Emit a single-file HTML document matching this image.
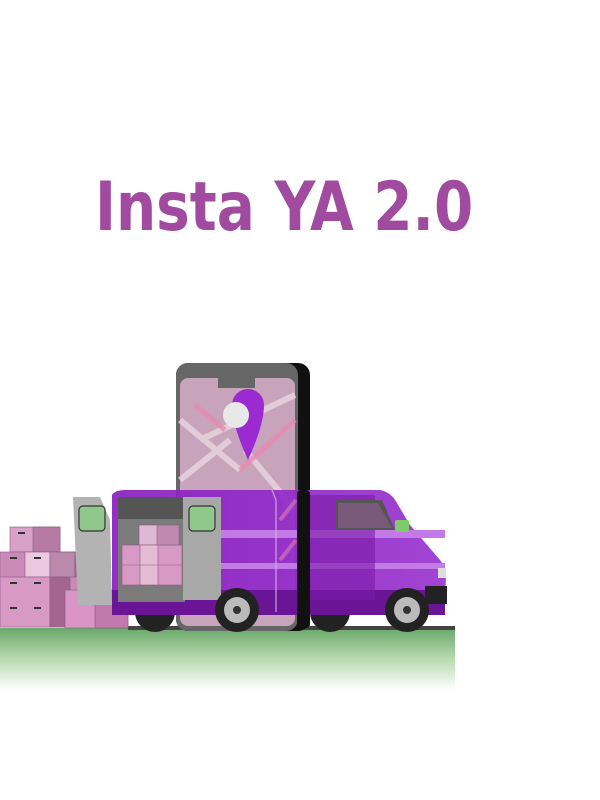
<!DOCTYPE html>
<html><head><meta charset="utf-8"><style>
html,body{margin:0;padding:0;background:#fff;width:600px;height:800px;overflow:hidden}
.t{position:absolute;left:95px;top:168px;font-family:"DejaVu Sans","Liberation Sans",sans-serif;font-weight:bold;font-size:68px;color:#a04aa0;transform:scaleX(0.83);transform-origin:0 0;white-space:nowrap;line-height:80px}
svg{position:absolute;left:0;top:0}
</style></head><body>
<div class="t">Insta YA 2.0</div>
<svg width="600" height="800" viewBox="0 0 600 800">
<defs>
<linearGradient id="g" x1="0" y1="0" x2="0" y2="1"><stop offset="0" stop-color="#6aa86a"/><stop offset="0.5" stop-color="#b8dab0"/><stop offset="1" stop-color="#fff"/></linearGradient>
<linearGradient id="v" x1="0" y1="0" x2="1" y2="0"><stop offset="0" stop-color="#8a1fc0"/><stop offset="1" stop-color="#9a35d0"/></linearGradient>
</defs>
<rect x="0" y="628" width="455" height="62" fill="url(#g)"/>
<rect x="128" y="626" width="327" height="4" fill="#444"/>
<!-- phone (behind van) -->
<rect x="176" y="363" width="134" height="268" rx="12" fill="#111"/>
<rect x="176" y="363" width="122" height="268" rx="12" fill="#666"/>
<rect x="180" y="378" width="115" height="248" rx="8" fill="#c7a4bc"/>
<path d="M218 378 L255 378 L255 388 L218 388Z" fill="#666"/>
<path d="M180 420 L240 470 M200 440 L295 395 M180 480 L230 440 M245 450 L295 510" stroke="#ead6e2" stroke-width="6" opacity="0.8"/>
<path d="M240 470 L295 420 M195 405 L225 430" stroke="#e98ab0" stroke-width="5" opacity="0.8"/>
<path d="M232 405 a16 16 0 0 1 32 0 q0 20 -16 55 q-16 -35 -16 -55Z" fill="#9b2bd0"/>
<circle cx="236" cy="415" r="13" fill="#e8e8e8"/>
<!-- boxes -->
<g stroke="#8a5a80" stroke-width="0.6">
<rect x="10" y="527" width="50" height="25" fill="#d9a0c8"/>
<rect x="33" y="527" width="27" height="25" fill="#b77aa5"/>
<rect x="0" y="552" width="105" height="75" fill="#c98ab8"/>
<rect x="25" y="552" width="25" height="25" fill="#ebc8df"/>
<rect x="50" y="552" width="25" height="25" fill="#b98aac"/>
<rect x="75" y="552" width="30" height="25" fill="#a9608f"/>
<rect x="0" y="577" width="50" height="50" fill="#d69ac4"/>
<rect x="50" y="577" width="20" height="50" fill="#a46590"/>
<rect x="65" y="590" width="63" height="38" fill="#d895c5"/>
<rect x="95" y="590" width="33" height="38" fill="#c07aab"/>
</g>
<g fill="#333"><rect x="18" y="532" width="7" height="2"/><rect x="10" y="557" width="7" height="2"/><rect x="34" y="557" width="7" height="2"/><rect x="10" y="582" width="7" height="2"/><rect x="34" y="582" width="7" height="2"/><rect x="10" y="607" width="7" height="2"/><rect x="34" y="607" width="7" height="2"/></g>
<!-- rear wheels -->
<circle cx="155" cy="612" r="20" fill="#222"/>
<circle cx="330" cy="612" r="20" fill="#222"/>
<!-- van body -->
<path d="M112 495 Q115 490 125 490 L380 490 Q392 492 398 505 L410 525 L440 560 Q448 570 445 590 L445 612 L112 612 Z" fill="url(#v)" opacity="0.93"/>
<path d="M112 590 L445 590 L445 615 L112 615 Z" fill="#6a1496"/>
<rect x="118" y="530" width="327" height="8" fill="#c37ae6"/>
<rect x="118" y="563" width="327" height="6" fill="#c37ae6"/>
<path d="M310 495 L375 495 L375 600 L310 600Z" fill="#7a1aa8" opacity="0.6"/>
<path d="M335 500 L382 500 L395 530 L335 530Z" fill="#555"/>
<path d="M338 503 L378 503 L392 528 L338 528Z" fill="#7a5a7a"/>
<rect x="395" y="520" width="14" height="12" rx="2" fill="#7ecb6a"/>
<rect x="438" y="568" width="8" height="10" fill="#ddd"/>
<rect x="425" y="586" width="22" height="18" fill="#222"/>
<!-- phone outline over van -->
<path d="M272 490 L276 500 L276 612" stroke="#d8b0e8" stroke-width="1.5" fill="none" opacity="0.7"/>
<path d="M280 520 L296 500 M280 560 L296 540" stroke="#e98ab0" stroke-width="4" opacity="0.5"/>
<rect x="297" y="490" width="13" height="138" rx="4" fill="#111"/>
<!-- cargo -->
<rect x="118" y="497" width="67" height="105" fill="#7b7b7b"/>
<rect x="118" y="497" width="67" height="22" fill="#555"/>
<g stroke="#8a5a80" stroke-width="0.6">
<rect x="122" y="545" width="60" height="40" fill="#d69ac4"/>
<rect x="139" y="525" width="40" height="20" fill="#c08ab0"/>
<rect x="139" y="525" width="18" height="20" fill="#e0b8d4"/>
<rect x="140" y="545" width="18" height="40" fill="#e4bcd6"/>
<line x1="122" y1="565" x2="182" y2="565"/>
</g>
<!-- doors -->
<path d="M73 497 L100 497 L110 520 L112 605 L78 605 Z" fill="#b3b3b3"/>
<rect x="79" y="506" width="26" height="25" rx="4" fill="#8fc88a" stroke="#333" stroke-width="1.2"/>
<rect x="183" y="497" width="38" height="103" fill="#a8a8a8"/>
<rect x="189" y="506" width="26" height="25" rx="4" fill="#8fc88a" stroke="#333" stroke-width="1.2"/>
<!-- front wheels -->
<circle cx="237" cy="610" r="22" fill="#222"/>
<circle cx="237" cy="610" r="13" fill="#bbb"/>
<circle cx="237" cy="610" r="4" fill="#333"/>
<circle cx="407" cy="610" r="22" fill="#222"/>
<circle cx="407" cy="610" r="13" fill="#bbb"/>
<circle cx="407" cy="610" r="4" fill="#333"/>
</svg>
</body></html>
